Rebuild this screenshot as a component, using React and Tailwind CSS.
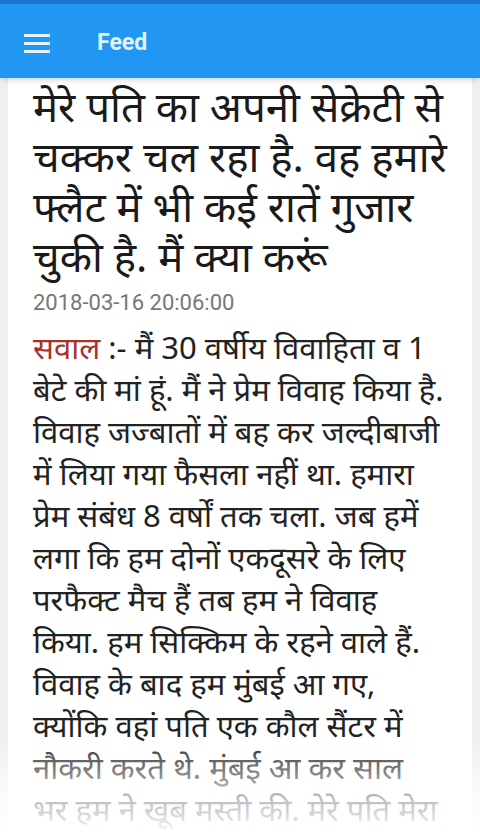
import React from "react";

const titleLines = [
  "मेरे पति का अपनी सेक्रेटी से",
  "चक्कर चल रहा है. वह हमारे",
  "फ्लैट में भी कई रातें गुजार",
  "चुकी है. मैं क्या करूं",
];

const bodyLines = [
  "बेटे की मां हूं. मैं ने प्रेम विवाह किया है.",
  "विवाह जज्बातों में बह कर जल्दीबाजी",
  "में लिया गया फैसला नहीं था. हमारा",
  "प्रेम संबंध 8 वर्षों तक चला. जब हमें",
  "लगा कि हम दोनों एकदूसरे के लिए",
  "परफैक्ट मैच हैं तब हम ने विवाह",
  "किया. हम सिक्किम के रहने वाले हैं.",
  "विवाह के बाद हम मुंबई आ गए,",
  "क्योंकि वहां पति एक कौल सैंटर में",
  "नौकरी करते थे. मुंबई आ कर साल",
  "भर हम ने खूब मस्ती की. मेरे पति मेरा",
];

const font = { fontFamily: '"Noto Sans", "Noto Sans Devanagari", Roboto, sans-serif' };

export default function App() {
  return (
    <div className="w-[480px] h-[832px] overflow-hidden bg-[#f0f0f0] relative" style={font}>
      {/* app bar */}
      <div className="relative z-10 shadow-md">
        <div className="h-[4px] bg-[#1b74d0]" />
        <div className="h-[74px] bg-[#2196f3] flex items-center pt-[4px]">
          <div className="w-[26px] ml-[24px] flex flex-col gap-[5px]">
            <span className="block h-[3px] bg-[#e3f2fd]" />
            <span className="block h-[3px] bg-[#e3f2fd]" />
            <span className="block h-[3px] bg-[#e3f2fd]" />
          </div>
          <span className="ml-[47px] text-[23px] font-bold text-[#e3f2fd]" style={{ fontFamily: "Roboto, sans-serif" }}>
            Feed
          </span>
        </div>
      </div>

      {/* article card */}
      <div className="mx-[8px] bg-white px-[25px] pt-[3px] h-[760px]">
        <h1 className="text-[42px] leading-[50px] text-[#1a1a1a] font-normal">
          {titleLines.map((l) => (
            <span key={l} className="block whitespace-nowrap">{l}</span>
          ))}
        </h1>
        <div className="mt-[9px] text-[22px] text-[#777] leading-[26px]" style={{ fontFamily: "Roboto, sans-serif" }}>
          2018-03-16 20:06:00
        </div>
        <div className="mt-[10px] text-[31px] leading-[42px] text-[#222]">
          <span className="block whitespace-nowrap">
            <span className="text-[#a8312a]">सवाल</span> :- मैं 30 वर्षीय विवाहिता व 1
          </span>
          {bodyLines.map((l) => (
            <span key={l} className="block whitespace-nowrap">{l}</span>
          ))}
        </div>
      </div>

      {/* fade at the bottom */}
      <div className="absolute left-0 right-0 bottom-0 h-[95px] bg-gradient-to-b from-white/0 via-white/60 to-white/95 pointer-events-none" />
    </div>
  );
}
